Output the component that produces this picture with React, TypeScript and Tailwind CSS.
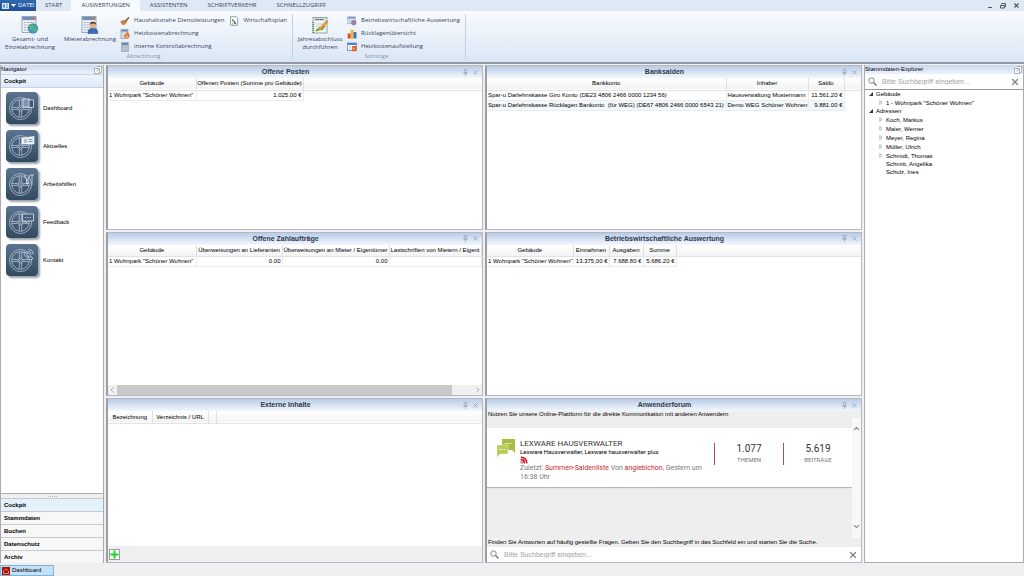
import React from "react";
import { X, ChevronUp, ChevronDown, ChevronLeft, ChevronRight, Rss } from "lucide-react";

const SheetIcon = () => (
  <>
    <rect x="1" y="0.5" width="14" height="16" fill="#eef1f5" stroke="#8796a8" strokeWidth="0.8" />
    <rect x="1.4" y="0.9" width="13.2" height="3.2" fill="#6f8fb8" />
    <rect x="10.5" y="1.5" width="3" height="1.8" fill="#e8743a" />
    <path d="M3 6.5h10M3 9h10M3 11.5h10M3 14h10" stroke="#9fb0c4" strokeWidth="1.2" strokeDasharray="2.2 0.8" />
  </>
);

const GlobeSheet = () => (
  <svg viewBox="0 0 18 18" className="h-[18px] w-[18px]">
    <SheetIcon />
    <circle cx="12" cy="12.5" r="4.8" fill="#3d9ad6" stroke="#2b6ea3" strokeWidth="0.5" />
    <path d="M8.500 11c1.500-3 4-2.800 4.300-1s-1 1.200-1.200 2.600-1.200 1.400-1.800.6-1.300-1-1.300-2.200z M13 12.800c1.800-1 3-.3 2.600 1s-1.800 2.600-2.600 2-.6-1.800 0-3z" fill="#63c04c" />
  </svg>
);

const PersonSheet = () => (
  <svg viewBox="0 0 18 18" className="h-[18px] w-[18px]">
    <SheetIcon />
    <path d="M7 17.500c0-4 1.900-5.200 4.900-5.200s5 1.200 5 5.200z" fill="#3b6cc0" stroke="#24457f" strokeWidth="0.500" />
    <circle cx="12" cy="9" r="3.200" fill="#e5b184" />
    <path d="M8.700 8.700c0-4 6.600-4 6.600 0-1.600-1.400-4.600-1.600-6.600 0z" fill="#4a3424" />
  </svg>
);

const YearSheet = () => (
  <svg viewBox="0 0 18 18" className="h-[18px] w-[18px]">
    <rect x="2" y="1.500" width="14" height="15.500" fill="#f2f5ee" stroke="#6f8078" strokeWidth="0.700" />
    <rect x="2.500" y="2" width="13" height="3" fill="#d7dde0" />
    <path d="M4.500 3.500h8" stroke="#44515c" strokeWidth="1.200" strokeDasharray="1.500 0.600" />
    <path d="M2.300 6v11" stroke="#3f9270" strokeWidth="1.600" strokeDasharray="1 1" />
    <path d="M5 8h6M5 10.500h4M5 13h3" stroke="#b9c6bd" strokeWidth="0.700" />
    <path d="M5 15l4-3 2 1.500 3-4" stroke="#5aa546" strokeWidth="1.600" fill="none" />
    <path d="M8 12.500L15.500 4.500l1.600 1.400L9.600 13.800l-2.100.6z" fill="#eba032" stroke="#9b651c" strokeWidth="0.400" />
  </svg>
);

const Broom = () => (
  <svg viewBox="0 0 10 10" className="h-[10px] w-[10px] shrink-0">
    <path d="M0.500 5.500L5 4l2 2-3 3-1-1-1 .5-.5-1.500z" fill="#c8873a" stroke="#8a5a22" strokeWidth="0.400" />
    <path d="M5 4.500L8.500 .8l1 .9L6.600 5.600z" fill="#8c6a3a" />
  </svg>
);

const Heating = () => (
  <svg viewBox="0 0 10 10" className="h-[10px] w-[10px] shrink-0">
    <rect x="1" y="0.500" width="7" height="9" fill="#d5dbe3" stroke="#8391a3" strokeWidth="0.600" />
    <rect x="1.300" y="0.800" width="6.400" height="1.800" fill="#6e90bf" />
    <path d="M7 2.500c2 2 3 3.500 2.600 5.100C9.200 9.800 4.600 9.800 4 7.600 3.700 6 6.800 5.200 7 2.500z" fill="#f0702a" />
    <circle cx="6.900" cy="7.500" r="1.100" fill="#ffd45a" />
  </svg>
);

const Calculator = () => (
  <svg viewBox="0 0 10 10" className="h-[10px] w-[10px] shrink-0">
    <rect x="1.500" y="0.500" width="7" height="9" fill="#aab3be" stroke="#8c96a3" strokeWidth="0.500" />
    <rect x="2" y="1" width="6" height="1.800" fill="#5e8cc4" />
    <path d="M2.500 4.500h5M2.500 6.300h5M2.500 8.100h5" stroke="#d8dde3" strokeWidth="0.900" strokeDasharray="1.200 0.700" />
  </svg>
);

const PlanSheet = () => (
  <svg viewBox="0 0 10 10" className="h-[10px] w-[10px] shrink-0">
    <path d="M1.500 .7h5.500l1.700 1.600v7H1.500z" fill="#fff" stroke="#6b7785" strokeWidth="0.700" />
    <path d="M3 3l2 1.500-1 1z" fill="#3a9a3a" stroke="#3a9a3a" strokeWidth="0.700" />
    <path d="M5 5l2 2.500-1.500.3z" fill="#333" stroke="#3c6b3c" strokeWidth="0.700" />
    <path d="M3 7.500l1 .8" stroke="#d03a2a" strokeWidth="0.900" />
  </svg>
);

const Evaluation = () => (
  <svg viewBox="0 0 10 10" className="h-[10px] w-[10px] shrink-0">
    <rect x="0.800" y="0.800" width="7.500" height="7" fill="#e8edf6" stroke="#8a98b5" strokeWidth="0.600" />
    <rect x="1" y="1" width="7" height="1.700" fill="#7b97cf" />
    <path d="M2 4.500h5M2 6.300h3" stroke="#9aa8bf" strokeWidth="0.700" />
    <circle cx="6.800" cy="6.800" r="2.300" fill="#8d86c9" stroke="#5f5b96" strokeWidth="0.400" />
    <path d="M6.800 6.800V4.500a2.300 2.300 0 0 1 2.300 2.300z" fill="#d06a5a" />
  </svg>
);

const BarsIcon = () => (
  <svg viewBox="0 0 10 10" className="h-[10px] w-[10px] shrink-0">
    <rect x="0.700" y="4.500" width="3" height="5" fill="#dd4a2c" />
    <rect x="3.600" y="0.800" width="3" height="8.700" fill="#f2b429" />
    <rect x="6.500" y="3" width="3" height="6.500" fill="#3e72c9" />
  </svg>
);

const HeatList = () => (
  <svg viewBox="0 0 10 10" className="h-[10px] w-[10px] shrink-0">
    <rect x="0.600" y="1" width="8.800" height="7.600" fill="#fff" stroke="#5278b5" strokeWidth="0.700" />
    <rect x="0.800" y="1" width="8.400" height="2" fill="#5580c6" />
    <path d="M2 5h2.500M2 7h2.500" stroke="#a7b4c8" strokeWidth="0.800" />
    <rect x="5.200" y="4" width="4" height="5.200" rx="0.500" fill="#e2542b" />
    <rect x="6.500" y="5.500" width="1.300" height="2.300" fill="#f9c14a" />
  </svg>
);

const Magnifier = () => (
  <svg viewBox="0 0 9 9" className="h-[9px] w-[9px] shrink-0" fill="none" stroke="#858585">
    <circle cx="3.500" cy="3.500" r="2.700" strokeWidth="1" />
    <path d="M5.500 5.500l3 3" strokeWidth="1.600" />
  </svg>
);

const smallActions = [
  { label: "Haushaltsnahe Dienstleistungen", icon: <Broom /> },
  { label: "Heizkostenabrechnung", icon: <Heating /> },
  { label: "interne Kontrollabrechnung", icon: <Calculator /> },
];

const otherActions = [
  { label: "Betriebswirtschaftliche Auswertung", icon: <Evaluation /> },
  { label: "Rücklagenübersicht", icon: <BarsIcon /> },
  { label: "Heizkostenaufstellung", icon: <HeatList /> },
];

const SmallAction = ({ label, icon }: { label: string; icon: React.ReactNode }) => (
  <button className="flex h-[13px] items-center gap-1 whitespace-nowrap">
    {icon}
    {label}
  </button>
);

type BigActionProps = {
  lines: string[];
  icon: React.ReactNode;
  width?: string;
};

const BigAction = ({ lines, icon, width = "w-15" }: BigActionProps) => (
  <button className={`flex flex-col items-center pt-[2px] leading-[8px] ${width}`}>
    {icon}
    <span className="pt-px">
      {lines.map((line) => (
        <span key={line} className="block whitespace-nowrap">
          {line}
        </span>
      ))}
    </span>
  </button>
);

const Ribbon = () => (
  <header className="font-['Open_Sans',sans-serif] text-[6px] text-[#34455e]">
    <div className="flex h-[11px] items-stretch bg-[#dfe9f5]">
      <button className="flex w-9 items-center gap-[2px] bg-gradient-to-b from-[#2f68b0] to-[#1d4f97] pl-[2px] text-white">
        <svg viewBox="0 0 7 6" className="h-[6px] w-[7px]">
          <rect width="7" height="6" fill="#dce8f7" />
          <path d="M1 1.500h2v3H1z" fill="#5b88c4" />
          <path d="M4 1.500h2M4 3h2M4 4.500h2" stroke="#5b88c4" strokeWidth="0.700" />
        </svg>
        <svg viewBox="0 0 5 3" className="h-[3px] w-[5px]">
          <path d="M0 0h5L2.500 3z" fill="#fff" />
        </svg>
        DATEI
      </button>
      <nav className="flex flex-1">
        <button className="px-[9px]">START</button>
        <button className="bg-[#f8fbff] px-[10px]">AUSWERTUNGEN</button>
        <button className="px-[10px]">ASSISTENTEN</button>
        <button className="px-[10px]">SCHRIFTVERKEHR</button>
        <button className="px-[10px]">SCHNELLZUGRIFF</button>
      </nav>
      <div className="flex items-center gap-[7px] pr-1">
        <button aria-label="Minimieren" className="flex h-[5px] w-[5px] items-end">
          <span className="block h-px w-1 bg-[#4d5866]" />
        </button>
        <button aria-label="Wiederherstellen">
          <svg viewBox="0 0 6 6" className="h-[6px] w-[6px]" fill="none" stroke="#4d5866" strokeWidth="1">
            <path d="M1.500 1.500V.6h4v3h-1M.5 2.500h4v2.500h-4z" />
          </svg>
        </button>
        <button aria-label="Schließen">
          <X className="h-[7px] w-[7px]" stroke="#4d5866" strokeWidth={4} />
        </button>
      </div>
    </div>
    <div className="flex h-[53px] border-b-2 border-[#92979f] bg-gradient-to-b from-[#f9fcff] to-[#dbe5f4]">
      <section className="my-[3px] flex flex-col justify-between border-r border-[#c3cfdf] pr-[5px]">
        <div className="flex">
          <BigAction lines={["Gesamt- und", "Einzelabrechnung"]} icon={<GlobeSheet />} />
          <BigAction lines={["Mieterabrechnung"]} icon={<PersonSheet />} />
          <div className="flex flex-col">
            {smallActions.map((action) => (
              <SmallAction key={action.label} label={action.label} icon={action.icon} />
            ))}
          </div>
          <div className="ml-[5px]">
            <SmallAction label="Wirtschaftsplan" icon={<PlanSheet />} />
          </div>
        </div>
        <h2 className="text-center leading-[6px] text-[#8695ab]">Abrechnung</h2>
      </section>
      <section className="my-[3px] flex flex-col justify-between border-r border-[#c3cfdf] pr-[5px]">
        <div className="flex">
          <BigAction lines={["Jahresabschluss", "durchführen"]} icon={<YearSheet />} width="w-[54px]" />
          <div className="flex flex-col">
            {otherActions.map((action) => (
              <SmallAction key={action.label} label={action.label} icon={action.icon} />
            ))}
          </div>
        </div>
        <h2 className="text-center leading-[6px] text-[#8695ab]">Sonstige</h2>
      </section>
    </div>
  </header>
);

const navLinks = [
  {
    label: "Dashboard",
    overlay: (
      <>
        <rect x="17" y="7" width="6.500" height="8" fill="#7d93ac" />
        <rect x="23" y="8" width="4.500" height="7.500" fill="#41587a" />
      </>
    ),
  },
  {
    label: "Aktuelles",
    overlay: (
      <>
        <path d="M16 8l12-1.500v7.500H16z" fill="#e9eef4" />
        <path d="M18 10h3M18 12h3M22.500 9.500h4M22.500 11.500h4" stroke="#52698a" />
      </>
    ),
  },
  {
    label: "Arbeitshilfen",
    overlay: <path d="M19 7v3l1.500 1v5h1.500v-5l1.200-1V7M24 7h4M26 7v10" />,
  },
  {
    label: "Feedback",
    overlay: (
      <>
        <path d="M16.500 8h11v7h-6l-1.500 2v-2h-3.500z" fill="#47607f" />
        <path d="M19 11.500h6" strokeDasharray="1.200 1" />
      </>
    ),
  },
  {
    label: "Kontakt",
    overlay: (
      <>
        <path d="M18.500 8c-2 2 4 9 7.500 7.500l.8-1.500-2.500-1.500-1.300 1c-1.200-.5-2.200-2-2.500-3l1-1.300z" fill="#47607f" />
        <path d="M22 7.500c2 0 3 1.200 3 3M22.500 5.500c3 0 4.500 2 4.500 4.500" />
      </>
    ),
  },
];

const WheelIcon = ({ overlay }: { overlay: React.ReactNode }) => (
  <span className="block rounded-[4px] bg-gradient-to-b from-[#5b7492] to-[#33495f] shadow-[2px_2px_2px_#9aa3ad]">
    <svg viewBox="0 0 32 32" className="h-8 w-8" fill="none" stroke="#c4d0dd" strokeWidth="0.700">
      <circle cx="14.500" cy="16.500" r="11" />
      <circle cx="14.500" cy="16.500" r="8.800" />
      <circle cx="14.500" cy="16.500" r="2.500" />
      <circle cx="14.500" cy="16.500" r="1" />
      <path d="M5.800 15.300l6.200.4M5.800 17.600l6.300-.3M17 15.700l6.200-.4M17 17.300l6.200.3M13.300 19v6.200M15.700 19v6.200M13.300 14V7.800M15.700 14V7.800" />
      <g stroke="#eef3f8">{overlay}</g>
    </svg>
  </span>
);

const DockTitle = ({ title }: { title: string }) => (
  <div className="flex h-[9px] items-center justify-between bg-gradient-to-b from-[#c9d8ee] to-[#edf3fb] pr-px leading-[9px]">
    <h2>{title}</h2>
    <button aria-label={`${title} lösen`}>
      <svg viewBox="0 0 8 8" className="h-2 w-2" fill="#fff" stroke="#8d97a6" strokeWidth="0.700">
        <path d="M.5 2.500h5v5h-5zM3 .5h4.500v6H6" />
        <path d="M2.500 5.500l3-3" />
      </svg>
    </button>
  </div>
);

const sections = ["Cockpit", "Stammdaten", "Buchen", "Datenschutz", "Archiv"];

const Navigator = () => (
  <aside className="flex w-[104px] shrink-0 flex-col border-x border-[#a9adb3] bg-[#f0f0f0]">
    <DockTitle title="Navigator" />
    <div className="flex flex-1 flex-col border-b border-[#a9adb3] bg-white">
      <h3 className="h-[14px] border-y border-[#c5d3e6] bg-gradient-to-b from-[#eef4fc] to-[#dfeaf8] pl-[3px] font-bold leading-[12px]">
        Cockpit
      </h3>
      <nav className="flex flex-col items-start gap-[6px] pt-1 pl-[5px]">
        {navLinks.map((link) => (
          <a key={link.label} href="#" className="flex items-center gap-[5px]">
            <WheelIcon overlay={link.overlay} />
            {link.label}
          </a>
        ))}
      </nav>
    </div>
    <div className="flex h-1 items-center justify-center gap-px">
      {[0, 1, 2, 3, 4].map((dot) => (
        <span key={dot} className="h-px w-px bg-[#b5b5b5]" />
      ))}
    </div>
    <ul>
      {sections.map((section, index) => (
        <li key={section}>
          <button
            className={`block h-[13px] w-full border-t border-[#c6c9cd] pl-[3px] text-left font-bold leading-[12px] ${
              index === 0 ? "bg-[#e3f1fb]" : "bg-[#f7f7f7]"
            }`}
          >
            {section}
          </button>
        </li>
      ))}
    </ul>
  </aside>
);

const Panel = ({ title, children }: { title: string; children: React.ReactNode }) => (
  <section className="flex min-h-0 min-w-0 flex-col border border-l-2 border-[#b3b8c2] border-l-[#9b9ea3] bg-white">
    <div className="flex h-3 shrink-0 items-center bg-gradient-to-b from-[#b9cce8] to-[#f3f7fc] pr-[3px]">
      <h2 className="flex-1 text-center text-[7px] leading-[12px] font-bold text-[#2c3a4e]">{title}</h2>
      <div className="flex items-center gap-1">
        <button aria-label="Anheften">
          <svg viewBox="0 0 5 7" className="h-[7px] w-[5px]" fill="none" stroke="#98a3b3" strokeWidth="0.800">
            <path d="M1.300.5h2.400v3.500H1.300zM.3 4h4.400M2.500 4v2.800" />
          </svg>
        </button>
        <button aria-label="Schließen">
          <X className="h-[7px] w-[7px]" stroke="#98a3b3" strokeWidth={3} />
        </button>
      </div>
    </div>
    {children}
  </section>
);

const headRow = "h-3 border-b border-[#e3e3e3] bg-gradient-to-b from-white to-[#f3f3f3]";
const headCell = "border-r border-[#e0e0e0] p-0 text-center font-normal whitespace-nowrap";
const cell = "border-r border-b border-[#e6ecf0] p-0 px-px whitespace-nowrap";

type GridProps = {
  columns: { label: string; width: string; right?: boolean }[];
  rows: string[][];
};

const Grid = ({ columns, rows }: GridProps) => (
  <table className="w-full table-fixed border-collapse leading-[9px]">
    <thead>
      <tr className={headRow}>
        {columns.map((column) => (
          <th key={column.label} className={`${headCell} ${column.width}`}>
            {column.label}
          </th>
        ))}
        <th className="p-0" />
      </tr>
    </thead>
    <tbody>
      {rows.map((row, rowIndex) => (
        <tr key={row[0]} className={`h-[10px] ${rowIndex % 2 ? "bg-[#f3f8fa]" : ""}`}>
          {row.map((value, index) => (
            <td key={index} className={`${cell} ${columns[index].right ? "text-right" : ""}`}>
              {value}
            </td>
          ))}
          <td className="bg-white p-0" />
        </tr>
      ))}
    </tbody>
  </table>
);

const SearchBox = ({ label }: { label: string }) => (
  <div className="flex h-[15px] shrink-0 items-center gap-[5px] bg-white px-[3px]">
    <Magnifier />
    <input
      type="text"
      aria-label={label}
      placeholder="Bitte Suchbegriff eingeben..."
      className="w-full min-w-0 flex-1 bg-transparent text-[7px] leading-[9px] outline-none placeholder:text-[#a3a3a3]"
    />
    <button aria-label="Suche leeren">
      <X className="h-[10px] w-[10px]" stroke="#808080" strokeWidth={3} />
    </button>
  </div>
);

const Stat = ({ value, label }: { value: string; label: string }) => (
  <div className="flex w-[69px] shrink-0 flex-col items-center border-l border-[#b8475a]">
    <span className="text-[10px] leading-[12px]">{value}</span>
    <span className="text-[6px] leading-[10px] text-[#777]">{label}</span>
  </div>
);

const Forum = () => (
  <div className="flex min-h-0 flex-1 flex-col bg-[#eeeeee]">
    <p className="pl-px leading-[7px]">
      Nutzen Sie unsere Online-Plattform für die direkte Kommunikation mit anderen Anwendern
    </p>
    <div className="flex min-h-0 flex-1">
      <div className="min-w-0 flex-1 pt-[10px] font-['Roboto',sans-serif]">
        <article className="flex items-start bg-white pt-[11px] pb-[5px] pl-[10px] text-[#333] shadow-[0_1px_1px_#b5b5b5]">
          <svg viewBox="0 0 18 19" className="h-[19px] w-[18px] shrink-0">
            <path d="M5 0h13v14l-3-3H5z" fill="#a9bd42" />
            <path d="M0 6h11v9H3l-3 3.500z" fill="#b9cb53" stroke="#fff" strokeWidth="0.400" />
            <path d="M8 4.500h7" stroke="#fff" strokeWidth="1.200" strokeDasharray="1.200 1" />
            <path d="M2.500 10.500h6" stroke="#fff" strokeWidth="1.200" strokeDasharray="1.200 1" />
          </svg>
          <div className="flex-1 pl-[5px]">
            <h3 className="text-[8px] leading-[9px]">LEXWARE HAUSVERWALTER</h3>
            <p className="text-[6px] leading-[8px] text-black">Lexware Hausverwalter, Lexware hausverwalter plus</p>
            <Rss className="h-2 w-2" stroke="#d02028" strokeWidth={5} />
            <p className="text-[7px] leading-[9px] text-[#777]">
              Zuletzt:{" "}
              <a href="#" className="text-[#c4262e]">
                Summen-Saldenliste
              </a>{" "}
              Von{" "}
              <a href="#" className="text-[#c4262e]">
                angiebichon
              </a>
              , Gestern um
              <br />
              16:38 Uhr
            </p>
          </div>
          <div className="flex pt-1">
            <Stat value="1.077" label="THEMEN" />
            <Stat value="5.619" label="BEITRÄGE" />
          </div>
        </article>
      </div>
      <div className="flex w-[9px] flex-col items-center justify-between bg-[#f8f8f8] pt-[6px] pb-[7px]">
        <ChevronUp className="h-[9px] w-[9px]" stroke="#8a8a8a" strokeWidth={3} />
        <ChevronDown className="h-[9px] w-[9px]" stroke="#8a8a8a" strokeWidth={3} />
      </div>
    </div>
    <p className="pl-px leading-[9px]">
      Finden Sie Antworten auf häufig gestellte Fragen. Geben Sie den Suchbegriff in das Suchfeld ein und starten Sie die
      Suche.
    </p>
    <SearchBox label="Anwenderforum durchsuchen" />
  </div>
);

const addresses = [
  { name: "Koch, Markus", open: true },
  { name: "Maier, Werner", open: true },
  { name: "Meyer, Regina", open: true },
  { name: "Müller, Ulrich", open: true },
  { name: "Schmidt, Thomas", open: true },
  { name: "Schmitt, Angelika", open: false },
  { name: "Schulz, Ines", open: false },
];

const Group = ({ label }: { label: string }) => (
  <button className="flex h-2 items-center gap-[3px] pl-1 leading-[8px]">
    <svg viewBox="0 0 4 4" className="h-1 w-1">
      <path d="M4 0v4H0z" fill="#333" />
    </svg>
    {label}
  </button>
);

const Leaf = ({ label, expandable }: { label: string; expandable: boolean }) => (
  <button className={`flex items-center gap-[3px] pl-[14px] leading-[8px] ${expandable ? "h-[9px]" : "h-2"}`}>
    <svg viewBox="0 0 4 5" className="h-[5px] w-1" fill="none" stroke="#9a9a9a" strokeWidth="0.700">
      {expandable && <path d="M.8.5l2.200 2-2.200 2z" />}
    </svg>
    {label}
  </button>
);

const Explorer = () => (
  <aside className="flex w-[160px] shrink-0 flex-col border border-t-0 border-[#a9adb3] bg-white">
    <DockTitle title="Stammdaten-Explorer" />
    <SearchBox label="Stammdaten durchsuchen" />
    <div className="flex-1 border-t border-[#8f959d]">
      <ul>
        <li>
          <Group label="Gebäude" />
          <Leaf label={'1 - Wohnpark "Schöner Wohnen"'} expandable />
        </li>
        <li>
          <Group label="Adressen" />
          {addresses.map((address) => (
            <Leaf key={address.name} label={address.name} expandable={address.open} />
          ))}
        </li>
      </ul>
    </div>
  </aside>
);

const App = () => {
  const building = '1 Wohnpark "Schöner Wohnen"';

  return (
    <div className="flex h-screen flex-col overflow-hidden bg-[#f0f0f0] font-['Liberation_Sans',sans-serif] text-[6px] text-black">
      <Ribbon />
      <main className="flex min-h-0 flex-1 gap-[2px] pt-px">
        <Navigator />
        <div className="grid min-w-0 flex-1 grid-cols-2 grid-rows-3 gap-[2px]">
          <Panel title="Offene Posten">
            <Grid
              columns={[
                { label: "Gebäude", width: "w-[88px]" },
                { label: "Offenen Posten (Summe pro Gebäude)", width: "w-[107px]", right: true },
              ]}
              rows={[[building, "1.025.00 €"]]}
            />
          </Panel>
          <Panel title="Banksalden">
            <Grid
              columns={[
                { label: "Bankkonto", width: "w-[239px]" },
                { label: "Inhaber", width: "w-[82px]" },
                { label: "Saldo", width: "w-[36px]", right: true },
              ]}
              rows={[
                ["Spar-u Darlehnskasse Giro Konto (DE23 4806 2466 0000 1234 56)", "Hausverwaltung Mustermann", "11.561,20 €"],
                [
                  "Spar-u Darlehnskasse Rücklagen Bankonto \u00a0(für WEG) (DE67 4806 2466 0000 6543 21)",
                  "Demo WEG Schöner Wohnen",
                  "9.881.00 €",
                ],
              ]}
            />
          </Panel>
          <Panel title="Offene Zahlaufträge">
            <div className="flex-1">
              <Grid
                columns={[
                  { label: "Gebäude", width: "w-[88px]" },
                  { label: "Überweisungen an Lieferanten", width: "w-[86px]", right: true },
                  { label: "Überweisungen an Mieter / Eigentümer", width: "w-[107px]", right: true },
                  { label: "Lastschriften von Mietern / Eigent", width: "w-[92px]" },
                ]}
                rows={[[building, "0.00", "0.00", ""]]}
              />
            </div>
            <div className="flex h-[10px] items-center gap-px bg-[#f0f0f0]">
              <ChevronLeft className="h-2 w-2 shrink-0" stroke="#8a8a8a" />
              <div className="flex h-full flex-1">
                <div className="h-full w-[94%] bg-[#c9c9c9]" />
              </div>
              <ChevronRight className="h-2 w-2 shrink-0" stroke="#8a8a8a" />
            </div>
          </Panel>
          <Panel title="Betriebswirtschaftliche Auswertung">
            <Grid
              columns={[
                { label: "Gebäude", width: "w-[86px]" },
                { label: "Einnahmen", width: "w-[36px]", right: true },
                { label: "Ausgaben", width: "w-[34px]", right: true },
                { label: "Summe", width: "w-[33px]", right: true },
              ]}
              rows={[[building, "13.375,00 €", "7.688.80 €", "5.686.20 €"]]}
            />
          </Panel>
          <Panel title="Externe Inhalte">
            <div className="flex-1">
              <Grid
                columns={[
                  { label: "Bezeichnung", width: "w-[44px]" },
                  { label: "Verzeichnis / URL", width: "w-[56px]" },
                  { label: "", width: "w-2" },
                ]}
                rows={[]}
              />
            </div>
            <div className="flex h-4 items-center bg-[#efefef] pl-px">
              <button aria-label="Hinzufügen" className="border border-[#9a9a9a] bg-white">
                <svg viewBox="0 0 9 9" className="h-[9px] w-[9px]">
                  <path d="M4.500 .5v8M.5 4.500h8" stroke="#12dc1c" strokeWidth="2" />
                </svg>
              </button>
            </div>
          </Panel>
          <Panel title="Anwenderforum">
            <Forum />
          </Panel>
        </div>
        <Explorer />
      </main>
      <footer className="flex h-[13px] shrink-0 items-end">
        <button className="flex h-[11px] w-[54px] items-center gap-[2px] border border-[#7fb2dc] bg-[#c5e0f5] pl-px">
          <svg viewBox="0 0 8 8" className="h-2 w-2">
            <rect width="8" height="8" fill="#a31212" />
            <path d="M1.500 4L4 1.800 6.500 4v2.500h-5z" fill="none" stroke="#f08a4a" strokeWidth="1" />
          </svg>
          Dashboard
        </button>
      </footer>
    </div>
  );
};

export default App;
